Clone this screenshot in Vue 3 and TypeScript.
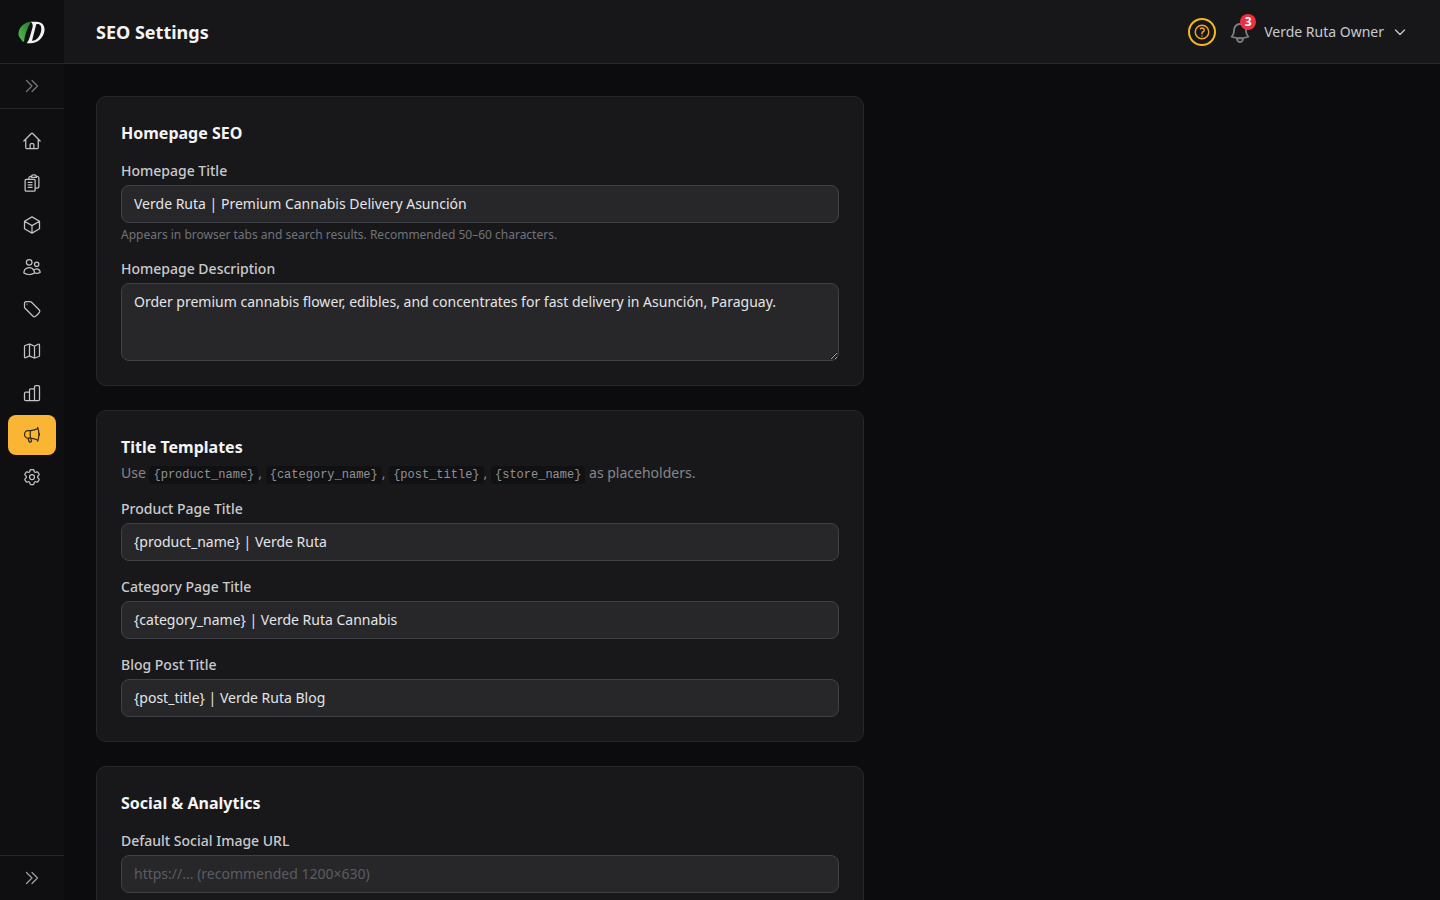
<script setup lang="ts">
const navItems = [
  { id: 'home', d: 'm2.25 12 8.954-8.955c.44-.439 1.152-.439 1.591 0L21.75 12M4.5 9.75v10.125c0 .621.504 1.125 1.125 1.125H9.75v-4.875c0-.621.504-1.125 1.125-1.125h2.25c.621 0 1.125.504 1.125 1.125V21h4.125c.621 0 1.125-.504 1.125-1.125V9.75M8.25 21h8.25' },
  { id: 'orders', d: 'M8.25 7.5V6.108c0-1.135.845-2.098 1.976-2.192.373-.03.748-.057 1.123-.08M15.75 18H18a2.25 2.25 0 0 0 2.25-2.25V6.108c0-1.135-.845-2.098-1.976-2.192a48.424 48.424 0 0 0-1.123-.08m-5.801 0A2.251 2.251 0 0 1 13.5 2.25H15c1.012 0 1.867.668 2.15 1.586m-5.8 0c-.065.21-.1.433-.1.664v.75h6V4.5c0-.231-.035-.454-.1-.664M4.875 7.5h9.75c.621 0 1.125.504 1.125 1.125v12c0 .621-.504 1.125-1.125 1.125h-9.75A1.125 1.125 0 0 1 3.75 20.625v-12c0-.621.504-1.125 1.125-1.125ZM7.5 11.25h4.5M7.5 14.25h4.5M7.5 17.25h4.5' },
  { id: 'box', d: 'm21 7.5-9-5.25L3 7.5m18 0-9 5.25m9-5.25v9l-9 5.25M3 7.5l9 5.25M3 7.5v9l9 5.25m0-9v9' },
  { id: 'users', d: 'M15 19.128a9.38 9.38 0 0 0 2.625.372 9.337 9.337 0 0 0 4.121-.952 4.125 4.125 0 0 0-7.533-2.493M15 19.128v-.003c0-1.113-.285-2.16-.786-3.07M15 19.128v.106A12.318 12.318 0 0 1 8.624 21c-2.331 0-4.512-.645-6.374-1.766l-.001-.109a6.375 6.375 0 0 1 11.964-3.07M12 6.375a3.375 3.375 0 1 1-6.75 0 3.375 3.375 0 0 1 6.75 0Zm8.25 2.25a2.625 2.625 0 1 1-5.25 0 2.625 2.625 0 0 1 5.25 0Z' },
  { id: 'tag', d: 'M9.568 3H5.25A2.25 2.25 0 0 0 3 5.25v4.318c0 .597.237 1.17.659 1.591l9.581 9.581c.699.699 1.78.872 2.607.33a18.095 18.095 0 0 0 5.223-5.223c.542-.827.369-1.908-.33-2.607L11.16 3.66A2.25 2.25 0 0 0 9.568 3Z M6 6h.008v.008H6V6Z' },
  { id: 'map', d: 'M3 6.5Q3 5.7 3.7 5.4L8.5 3.800Q9 3.600 9.5 3.800L14.5 6Q15 6.200 15.5 6L19.500 3.900Q21 3.500 21 5V17.500Q21 18.300 20.300 18.600L15.500 20.400Q15 20.600 14.500 20.400L9.500 18.200Q9 18 8.500 18.200L4.500 20Q3 20.500 3 19ZM9 3.800V18M15 6.200V20.400' },
  { id: 'chart', d: 'M4.500 11H7.500A1.500 1.500 0 0 1 9 12.500V21H4.500A1.500 1.500 0 0 1 3 19.500V12.500A1.500 1.500 0 0 1 4.500 11ZM9 21V8.500A1.500 1.500 0 0 1 10.500 7H13.500A1.500 1.500 0 0 1 15 8.500V21ZM15 21V4.500A1.500 1.500 0 0 1 16.500 3H19.500A1.500 1.500 0 0 1 21 4.500V19.500A1.500 1.500 0 0 1 19.500 21Z' },
  { id: 'megaphone', active: true, d: 'M10.34 15.84c-.688-.06-1.386-.09-2.09-.09H7.5a4.5 4.5 0 1 1 0-9h.75c.704 0 1.402-.03 2.09-.09m0 9.18c.253.962.584 1.892.985 2.783.247.55.06 1.21-.463 1.511l-.657.38c-.551.318-1.26.117-1.527-.461a20.845 20.845 0 0 1-1.44-4.282m3.102.069a18.03 18.03 0 0 1-.59-4.59c0-1.586.205-3.124.59-4.59m0 9.18a23.848 23.848 0 0 1 8.835 2.535M10.34 6.66a23.847 23.847 0 0 0 8.835-2.535m0 0A23.74 23.74 0 0 0 18.795 3m.38 1.125a23.91 23.91 0 0 1 1.014 5.395m-1.014 8.855c-.118.38-.245.754-.38 1.125m.38-1.125a23.91 23.91 0 0 0 1.014-5.395m0-3.46c.495.413.811 1.035.811 1.73 0 .695-.316 1.317-.811 1.73m0-3.46a24.347 24.347 0 0 1 0 3.46' },
  { id: 'gear', d: 'M9.594 3.94c.09-.542.56-.94 1.11-.94h2.593c.55 0 1.02.398 1.11.94l.213 1.281c.063.374.313.686.645.87.074.04.147.083.22.127.325.196.72.257 1.075.124l1.217-.456a1.125 1.125 0 0 1 1.37.49l1.296 2.247a1.125 1.125 0 0 1-.26 1.431l-1.003.827c-.293.241-.438.613-.43.992a7.723 7.723 0 0 1 0 .255c-.008.378.137.75.43.991l1.004.827c.424.35.534.955.26 1.43l-1.298 2.247a1.125 1.125 0 0 1-1.369.491l-1.217-.456c-.355-.133-.75-.072-1.076.124a6.47 6.47 0 0 1-.22.128c-.331.183-.581.495-.644.869l-.213 1.281c-.09.543-.56.94-1.11.94h-2.594c-.55 0-1.019-.398-1.11-.94l-.213-1.281c-.062-.374-.312-.686-.644-.87a6.52 6.52 0 0 1-.22-.127c-.325-.196-.72-.257-1.076-.124l-1.217.456a1.125 1.125 0 0 1-1.369-.49l-1.297-2.247a1.125 1.125 0 0 1 .26-1.431l1.004-.827c.292-.24.437-.613.43-.991a6.932 6.932 0 0 1 0-.255c.007-.38-.138-.751-.43-.992l-1.004-.827a1.125 1.125 0 0 1-.26-1.43l1.297-2.247a1.125 1.125 0 0 1 1.37-.491l1.216.456c.356.133.751.072 1.076-.124.072-.044.146-.086.22-.128.332-.183.582-.495.644-.869l.214-1.28Z M15 12a3 3 0 1 1-6 0 3 3 0 0 1 6 0Z' },
]
const templates = [
  { label: 'Product Page Title', value: '{product_name} | Verde Ruta' },
  { label: 'Category Page Title', value: '{category_name} | Verde Ruta Cannabis' },
  { label: 'Blog Post Title', value: '{post_title} | Verde Ruta Blog' },
]
const description = 'Order premium cannabis flower, edibles, and concentrates for fast delivery in Asunción, Paraguay.'
</script>

<template>
  <div class="shell">
    <aside class="sidebar">
      <div class="logo">
        <svg width="28" height="28" viewBox="0 0 28 28" aria-hidden="true">
          <defs>
            <linearGradient id="leaf" x1="0" y1="1" x2="1" y2="0">
              <stop offset="0" stop-color="#58c04e" />
              <stop offset="1" stop-color="#1f7a35" />
            </linearGradient>
          </defs>
          <path d="M13 3.700C6.500 4 1 9 .5 15 .3 18 1.500 20 3 21 3.500 22.500 4.500 23.500 6 24 6.500 18 9 10 13 3.700Z" fill="url(#leaf)" />
          <path fill-rule="evenodd" d="M12.500 3.700H18.500C24 3.700 27.200 7.500 26.500 12.800 25.500 19.800 19.500 25.300 12.500 25.300H8.500C10 23.500 11 21.500 11.800 19L14.500 9.500C15.200 7 14.500 5 12.500 3.700ZM19.500 6C19 6 18.500 6 18.200 6.400L14 22.800C18.500 23 22.300 18 23.200 12.500 23.800 8.500 22.500 6 19.500 6Z" fill="#f2f2f2" />
        </svg>
      </div>
      <button class="toggle" type="button" aria-label="Expand sidebar">
        <svg width="16" height="16" viewBox="0 0 16 16" fill="none" stroke="currentColor" stroke-width="1.200" stroke-linecap="round" stroke-linejoin="round"><path d="M2.500 2.500 8 8l-5.500 5.500M8 2.500 13.500 8 8 13.500" /></svg>
      </button>
      <nav class="nav">
        <a v-for="item in navItems" :key="item.id" class="nav-item" :class="{ active: item.active }">
          <svg width="20" height="20" viewBox="0 0 24 24" fill="none" stroke="currentColor" stroke-width="1.500" stroke-linecap="round" stroke-linejoin="round">
            <path :d="item.d" />
          </svg>
        </a>
      </nav>
      <button class="toggle bottom" type="button" aria-label="Expand sidebar">
        <svg width="16" height="16" viewBox="0 0 16 16" fill="none" stroke="currentColor" stroke-width="1.200" stroke-linecap="round" stroke-linejoin="round"><path d="M2.500 2.500 8 8l-5.500 5.500M8 2.500 13.500 8 8 13.500" /></svg>
      </button>
    </aside>

    <div class="content">
      <header class="topbar">
        <h1>SEO Settings</h1>
        <div class="top-actions">
          <span class="help">
            <svg width="18" height="18" viewBox="0 0 24 24" fill="none" stroke="#f5a524" stroke-width="1.900" stroke-linecap="round" stroke-linejoin="round"><path d="M9.879 7.519c1.171-1.025 3.071-1.025 4.242 0 1.172 1.025 1.172 2.687 0 3.712-.203.179-.43.326-.67.442-.745.361-1.45.999-1.45 1.827v.75M21 12a9 9 0 1 1-18 0 9 9 0 0 1 18 0Zm-9 5.250h.008v.008H12v-.008Z" /></svg>
          </span>
          <span class="bell">
            <svg width="24" height="24" viewBox="0 0 24 24" fill="none" stroke="#7e8084" stroke-width="1.800" stroke-linecap="round" stroke-linejoin="round"><path d="M14.857 17.082a23.848 23.848 0 0 0 5.454-1.31A8.967 8.967 0 0 1 18 9.750V9A6 6 0 0 0 6 9v.75a8.967 8.967 0 0 1-2.312 6.022c1.733.64 3.56 1.085 5.455 1.310m5.714 0a24.255 24.255 0 0 1-5.714 0m5.714 0a3 3 0 1 1-5.714 0" /></svg>
            <span class="badge">3</span>
          </span>
          <span class="user">Verde Ruta Owner</span>
          <svg class="chev" width="16" height="16" viewBox="0 0 16 16" fill="none" stroke="currentColor" stroke-width="1.400" stroke-linecap="round" stroke-linejoin="round"><path d="M3.500 6 8 10.500 12.500 6" /></svg>
        </div>
      </header>

      <main class="main">
        <section class="card">
          <h2>Homepage SEO</h2>
          <div class="field">
            <label>Homepage Title</label>
            <input class="control" value="Verde Ruta | Premium Cannabis Delivery Asunción" />
            <p class="hint">Appears in browser tabs and search results. Recommended 50–60 characters.</p>
          </div>
          <div class="field">
            <label>Homepage Description</label>
            <textarea class="control area" rows="3" :value="description"></textarea>
          </div>
        </section>

        <section class="card">
          <h2 class="tight">Title Templates</h2>
          <p class="sub">Use <code>{product_name}</code>, <code>{category_name}</code>, <code>{post_title}</code>, <code>{store_name}</code> as placeholders.</p>
          <div v-for="t in templates" :key="t.label" class="field">
            <label>{{ t.label }}</label>
            <input class="control" :value="t.value" />
          </div>
        </section>

        <section class="card">
          <h2>Social &amp; Analytics</h2>
          <div class="field">
            <label>Default Social Image URL</label>
            <input class="control" placeholder="https://... (recommended 1200×630)" />
          </div>
        </section>
      </main>
    </div>
  </div>
</template>

<style>
html, body { margin: 0; height: 100%; overflow: hidden; background: #0c0c0e; }
</style>

<style scoped>
* { box-sizing: border-box; }
.shell {
  display: flex;
  height: 900px;
  overflow: hidden;
  background: #0c0c0e;
  color: #e8e8ea;
  font-family: "Noto Sans", sans-serif;
}
.sidebar {
  width: 64px;
  flex: none;
  display: flex;
  flex-direction: column;
  background: #0f0f11;
}
.logo {
  height: 64px;
  flex: none;
  display: flex;
  align-items: center;
  justify-content: center;
  border-bottom: 1px solid #24262a;
}
.toggle {
  height: 45px;
  flex: none;
  border: 0;
  border-bottom: 1px solid #24262a;
  background: transparent;
  color: #77797d;
  padding: 0;
  display: flex;
  align-items: center;
  justify-content: center;
}
.toggle.bottom {
  margin-top: auto;
  border-bottom: 0;
  border-top: 1px solid #24262a;
  color: #a0a1a5;
}
.nav {
  flex: 1;
  display: flex;
  flex-direction: column;
  gap: 2px;
  padding: 12px 8px;
}
.nav-item {
  height: 40px;
  display: flex;
  align-items: center;
  justify-content: center;
  border-radius: 8px;
  color: #c2c3c6;
}
.nav-item.active {
  background: #fbb535;
  color: #33291a;
}
.content {
  flex: 1;
  min-width: 0;
  display: flex;
  flex-direction: column;
}
.topbar {
  height: 64px;
  flex: none;
  display: flex;
  align-items: center;
  justify-content: space-between;
  padding: 0 32px;
  background: #17171a;
  border-bottom: 1px solid #2a2a2e;
}
h1 {
  margin: 0;
  font-size: 18px;
  font-weight: 700;
  color: #f4f4f5;
}
.top-actions {
  display: flex;
  align-items: center;
}
.help {
  width: 28px;
  height: 28px;
  border: 2px solid #f5b61f;
  border-radius: 50%;
  display: flex;
  align-items: center;
  justify-content: center;
  margin-right: 12px;
}
.bell {
  position: relative;
  width: 24px;
  height: 24px;
  margin-top: 2px;
  margin-right: 12px;
}
.badge {
  position: absolute;
  top: -7px;
  right: -4px;
  width: 16px;
  height: 16px;
  border-radius: 50%;
  background: #ee3042;
  color: #fff;
  font-size: 12px;
  font-weight: 700;
  line-height: 16px;
  text-align: center;
}
.user {
  font-size: 14px;
  color: #c9cacc;
}
.chev {
  color: #c2c3c6;
  margin-left: 8px;
}
.main {
  flex: 1;
  min-height: 0;
  overflow: hidden;
  padding: 32px;
  display: flex;
  flex-direction: column;
  gap: 24px;
}
.card {
  width: 768px;
  flex: none;
  padding: 24px;
  background: #18181b;
  border: 1px solid #27272a;
  border-radius: 10px;
}
h2 {
  margin: 0 0 16px;
  font-size: 16px;
  line-height: 24px;
  font-weight: 700;
  color: #f4f4f5;
}
h2.tight { margin-bottom: 0; }
.sub {
  margin: 4px 0 14px;
  font-size: 14px;
  line-height: 20px;
  color: #85868a;
}
code {
  font-family: "Liberation Mono", monospace;
  font-size: 12px;
  padding: 2px 4px;
  border-radius: 4px;
  background: #111113;
  color: #909195;
}
.field + .field { margin-top: 16px; }
label {
  display: block;
  font-size: 14px;
  line-height: 20px;
  font-weight: 500;
  margin-bottom: 4px;
  color: #c9cacc;
}
.control {
  display: block;
  width: 100%;
  height: 38px;
  padding: 0 12px 2px;
  border: 1px solid #3f3f46;
  border-radius: 8px;
  background: #27272a;
  color: #e4e4e7;
  font-family: inherit;
  font-size: 14px;
  outline: none;
}
.control::placeholder { color: #5b5c61; opacity: 1; }
.area {
  height: 78px;
  padding: 8px 12px;
  line-height: 20px;
  resize: vertical;
}
.hint {
  margin: 4px 0 0;
  font-size: 12px;
  line-height: 16px;
  color: #717277;
}
</style>
